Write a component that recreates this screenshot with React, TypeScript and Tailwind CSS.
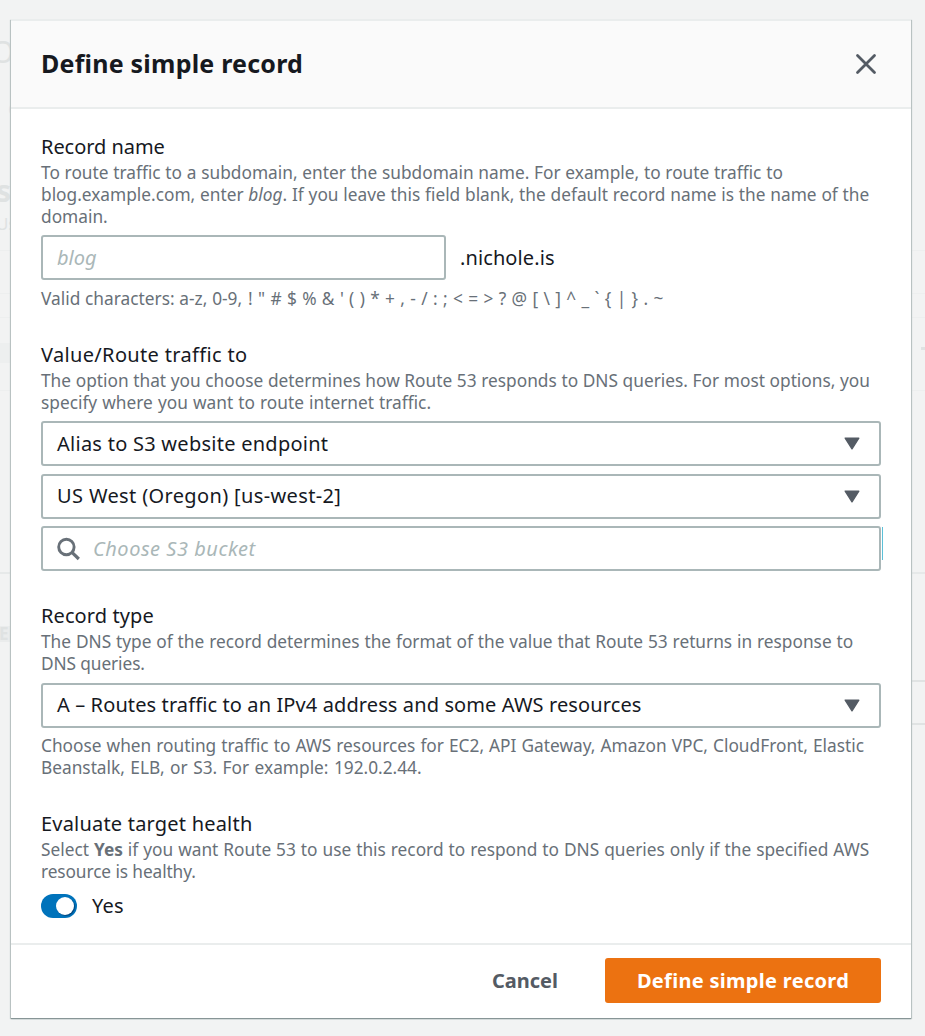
import React from "react";

const Select = ({ children, className = "" }: { children: React.ReactNode; className?: string }) => (
  <div className={`flex h-[45px] w-[840px] items-center justify-between rounded-[3px] border-2 border-[#aab7b8] bg-white pr-[19px] pl-[14px] ${className}`}>
    {children}
    <svg width="16" height="13" viewBox="0 0 16 13" className="block">
      <path d="M1.2 1.2h13.6L8 11.8z" fill="#545b64" stroke="#545b64" strokeWidth="1.4" strokeLinejoin="round" />
    </svg>
  </div>
);

const Label = ({ children, className = "" }: { children: React.ReactNode; className?: string }) => (
  <div className={`h-[31px] pt-px text-[20px] leading-[30px] ${className}`}>{children}</div>
);

const Line = ({ children, className = "" }: { children: React.ReactNode; className?: string }) => (
  <div className={`h-[22px] text-[17.3px] leading-[22px] text-[#687078] ${className}`}>{children}</div>
);

const PageBehind = () => (
  <div className="absolute inset-0 overflow-hidden text-[#dfe2e2]" aria-hidden="true">
    <span className="absolute top-[29px] left-[-9px] text-[30px]">O</span>
    <span className="absolute top-[93px] left-[8px] text-[20px] text-[#e2e4e8]">c</span>
    <span className="absolute top-[168px] left-[-4px] text-[30px] font-bold">s</span>
    <span className="absolute top-[211px] left-[-4px] text-[17px]">Us</span>
    <div className="absolute top-[250px] left-0 h-px w-full bg-[#edefef]" />
    <div className="absolute top-[293px] left-0 h-px w-full bg-[#edefef]" />
    <div className="absolute top-[317px] left-0 h-px w-full bg-[#edefef]" />
    <div className="absolute top-[343px] left-0 h-[20px] w-[11px] bg-[#edefef]" />
    <div className="absolute top-[347px] left-[921px] h-[3px] w-[4px] bg-[#dfe2e2]" />
    <div className="absolute top-[390px] left-0 h-px w-full bg-[#edefef]" />
    <div className="absolute top-[572px] left-0 h-[2px] w-full bg-[#e6e9e9]" />
    <div className="absolute top-[626px] left-0 h-[16px] w-[11px] bg-[#eaecec]" />
    <span className="absolute top-[621px] left-[-1px] text-[17px] leading-[26px] font-bold">E</span>
    <div className="absolute top-[680px] left-[905px] h-[2px] w-[20px] bg-[#e0e3e3]" />
    <div className="absolute top-[723px] left-[905px] h-[2px] w-[20px] bg-[#e0e3e3]" />
  </div>
);

export default function App() {
  return (
    <div className="relative flex h-[1036px] w-[925px] flex-col overflow-hidden bg-[#f2f3f3] pt-[19px] pl-[11px] font-['Noto_Sans',sans-serif] whitespace-nowrap text-[#16191f]">
      <PageBehind />
      <section className="relative flex h-[999px] w-[900px] flex-col bg-white shadow-[0_1px_1px_0_#879596,1px_1px_1px_0_#c3cccc,-1px_1px_1px_0_#c3cccc]">
        <header className="flex h-[90px] items-center justify-between border-y-2 border-[#eaeded] bg-[#fafafa] pr-[33px] pl-[30px]">
          <h1 className="pb-[2px] text-[25px] leading-[36px] font-bold tracking-[0.22px]">Define simple record</h1>
          <svg width="24" height="24" viewBox="0 0 24 24" fill="none" stroke="#545b64" strokeWidth="2.8" strokeLinecap="round">
            <path d="M3.5 3.5l17 17M20.5 3.5l-17 17" />
          </svg>
        </header>
        <main className="flex h-[834px] flex-col px-[30px] pt-[22px]">
          <div className="h-[208px]">
            <Label className="tracking-[-0.05px]">Record name</Label>
            <Line className="[word-spacing:0.25px]">To route traffic to a subdomain, enter the subdomain name. For example, to route traffic to</Line>
            <Line className="[word-spacing:0.3px]">blog.example.com, enter <em>blog</em>. If you leave this field blank, the default record name is the name of the</Line>
            <Line>domain.</Line>
            <div className="mt-[7px] flex items-center">
              <div className="flex h-[45px] w-[405px] items-center rounded-[3px] border-2 border-[#aab7b8] pl-[14px] text-[20px] text-[#aab7b8] italic">blog</div>
              <span className="ml-[14px] text-[20px] tracking-[0.1px]">.nichole.is</span>
            </div>
            <Line className="mt-[8px] flex">
              <span className="w-[207px] [word-spacing:0.3px]">Valid characters: a-z, 0-9,</span>
              <span className="[word-spacing:0.86px]">{"! \" # $ % & ' ( ) * + , - / : ; < = > ? @ [ \\ ] ^ _ ` { | } . ~"}</span>
            </Line>
          </div>
          <div className="h-[261px]">
            <Label className="tracking-[0.34px]">Value/Route traffic to</Label>
            <Line className="[word-spacing:0.15px]">The option that you choose determines how Route 53 responds to DNS queries. For most options, you</Line>
            <Line className="[word-spacing:0.6px]">specify where you want to route internet traffic.</Line>
            <Select className="mt-[7px]"><span className="text-[20px] tracking-[0.26px]">Alias to S3 website endpoint</span></Select>
            <Select className="mt-[8px]"><span className="pb-[2px] text-[20px] tracking-[0.36px]">US West (Oregon) [us-west-2]</span></Select>
            <div className="mt-[7px] flex items-center gap-px">
              <div className="flex h-[45px] w-[840px] shrink-0 items-center rounded-[3px] border-2 border-[#aab7b8] pl-[14px]">
                <svg width="24" height="24" viewBox="0 0 24 24" fill="none" stroke="#687078" strokeWidth="2.9">
                  <circle cx="9.4" cy="10" r="7.7" />
                  <path d="M15 15.4l6.8 6.6" strokeWidth="3.2" />
                </svg>
                <span className="ml-[12px] text-[20px] tracking-[0.52px] text-[#aab7b8] italic">Choose S3 bucket</span>
              </div>
              <div className="mb-[10px] h-[33px] w-px shrink-0 bg-[#5bc0d8]" />
            </div>
          </div>
          <div className="h-[208px]">
            <Label className="tracking-[0.1px]">Record type</Label>
            <Line className="[word-spacing:0.38px]">The DNS type of the record determines the format of the value that Route 53 returns in response to</Line>
            <Line className="tracking-[-0.1px]">DNS queries.</Line>
            <Select className="mt-[8px]"><span className="pb-[2px] text-[20px] tracking-[0.11px]">A – Routes traffic to an IPv4 address and some AWS resources</span></Select>
            <Line className="mt-[7px] [word-spacing:0.54px]">Choose when routing traffic to AWS resources for EC2, API Gateway, Amazon VPC, CloudFront, Elastic</Line>
            <Line className="[word-spacing:0.95px]">Beanstalk, ELB, or S3. For example: 192.0.2.44.</Line>
          </div>
          <div>
            <Label className="tracking-[0.2px]">Evaluate target health</Label>
            <Line className="[word-spacing:0.47px]">Select <b>Yes</b> if you want Route 53 to use this record to respond to DNS queries only if the specified AWS</Line>
            <Line className="tracking-[-0.1px]">resource is healthy.</Line>
            <div className="mt-[11px] flex h-[24px] items-center">
              <div className="flex h-[24px] w-[36px] items-center justify-end rounded-full bg-[#0073bb] pr-[3px]">
                <div className="size-[18px] rounded-full bg-white shadow-[1px_1px_1px_0_#00457e]" />
              </div>
              <span className="ml-[15px] text-[20px] tracking-[0.2px]">Yes</span>
            </div>
          </div>
        </main>
        <footer className="flex h-[75px] items-center justify-end border-t-2 border-[#eaeded] pr-[30px] pb-[2px]">
          <span className="mr-[47px] text-[20px] font-bold text-[#545b64]">Cancel</span>
          <button className="h-[45px] w-[276px] rounded-[3px] bg-[#ec7211] text-[20px] font-bold tracking-[0.3px] text-white">Define simple record</button>
        </footer>
      </section>
    </div>
  );
}
